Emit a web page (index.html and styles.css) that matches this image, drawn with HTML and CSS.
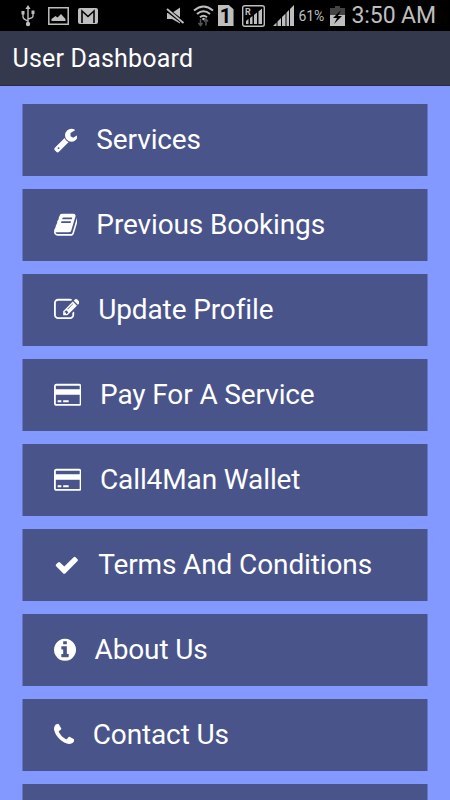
FILE: index.html
```html
<!DOCTYPE html>
<html lang="en">

<head>
    <meta charset="UTF-8">
    <meta name="viewport" content="width=device-width, initial-scale=1.0">
    <title>User Dashboard</title>
    <link rel="stylesheet" href="styles.css">
</head>

<body>

    <!-- Status bar -->
    <div class="status-bar">
        <div class="status-left">
            <svg class="usb" width="14" height="22" viewBox="0 0 14 22" fill="none" stroke="currentColor" stroke-width="1.4">
                <path d="M7 3v15M2 9v3q0 2 5 4M12 9v2q0 2-5 3" />
                <path d="M7 0l2.600 4H4.400zM.5 6h3v3.500h-3zM10.500 5.500h3V9h-3z" fill="currentColor" stroke="none" />
                <circle cx="7" cy="19" r="2.200" fill="currentColor" stroke="none" />
            </svg>
            <svg class="picture" width="21" height="18" viewBox="0 0 21 18" fill="none" stroke="currentColor" stroke-width="1.500">
                <path d="M.8.8h19.400v16.400H.8z" />
                <path d="M3.500 14v-2l4-3 2 1.500L13 7l4.500 5v2z" fill="currentColor" stroke="none" />
            </svg>
            <svg class="mail" width="20" height="16" viewBox="0 0 20 16">
                <rect width="20" height="16" rx="2" fill="currentColor" />
                <path d="M4 15V3l6 5.500L16 3v12" fill="none" stroke="#000" stroke-width="1.600" />
            </svg>
        </div>
        <div class="status-right">
            <svg class="mute" width="19" height="18" viewBox="0 0 19 18">
                <path d="M1 6h5l8-5.500v16L6 12H1z" fill="currentColor" />
                <path d="M0 2l18 14" stroke="#000" stroke-width="4" />
                <path d="M1 2l16.500 14" stroke="currentColor" stroke-width="1.800" />
            </svg>
            <svg class="wifi" width="21" height="22" viewBox="0 0 21 22" fill="none" stroke="currentColor" stroke-width="2">
                <path d="M1 5.500q9.500-8 19 0M4 9q6.500-5.500 13 0M7 12.300q3.500-3 7 0" />
                <circle cx="10.500" cy="14" r="1.300" fill="currentColor" stroke="none" />
                <path d="M7.500 14v6M5.500 18l2 2.500 2-2.500M13 20.500v-6M11 16.500l2-2.500 2 2.500" stroke="#555" stroke-width="1.500" />
            </svg>
            <div class="sim">1</div>
            <svg class="roaming" width="23" height="22" viewBox="0 0 23 22">
                <rect x=".7" y=".7" width="21.600" height="20.600" rx="2" fill="none" stroke="currentColor" stroke-width="1.400" />
                <path d="M4 19v-3l2.500-2v5zM8 19v-6l2.500-2v8zM12 19v-9l3-2.500V19zM16.500 19V6.500L20 3.500V19z" fill="currentColor" />
                <text x="3" y="10" class="roaming-text">R</text>
            </svg>
            <svg class="signal" width="21" height="21" viewBox="0 0 21 21" fill="currentColor">
                <path d="M0 21l3.500-3.500V21zM4.500 21v-4.500L8 13v8zM9 21v-9l3.500-3.500V21zM13.500 21V7.500L16 5v16zM17 21V4l4-4v21z" />
            </svg>
            <span class="percent">61%</span>
            <svg class="battery" width="15" height="20" viewBox="0 0 15 20">
                <path d="M5 0h5v2h5v8H0V2h5z" fill="#444" />
                <path d="M0 9h15v11H0z" fill="currentColor" />
                <path d="M11 4l-8 8h4l-3 6 8-8H8z" fill="#000" />
            </svg>
            <span class="clock">3:50 AM</span>
        </div>
    </div>

    <div class="header">
        <h1>User Dashboard</h1>
    </div>

    <!-- Menu -->
    <div class="menu">
        <a class="menu-item">
            <svg class="icon" viewBox="64 0 1664 1792"><path d="M448 1472q0-26-19-45t-45-19-45 19-19 45 19 45 45 19 45-19 19-45zm644-420l-682 682q-37 37-90 37-52 0-91-37l-106-108q-38-36-38-90 0-53 38-91l681-681q39 98 114.500 173.500t173.500 114.500zm634-435q0 39-23 106-47 134-164.500 217.500t-258.500 83.500q-185 0-316.500-131.500t-131.500-316.500 131.500-316.500 316.500-131.500q58 0 121.500 16.500t107.500 46.500q16 11 16 28t-16 28l-293 169v224l193 107q5-3 79-48.500t135.500-81 70.500-35.500q15 0 23.500 10t8.500 25z" /></svg>
            <span>Services</span>
        </a>
        <a class="menu-item">
            <svg class="icon" viewBox="64 0 1664 1792"><path d="M1703 478q40 57 18 129l-275 906q-19 64-76.500 107.500t-122.500 43.500h-923q-77 0-148.500-53.500t-99.500-131.500q-24-67-2-127 0-4 3-27t4-37q1-8-3-21.500t-3-19.500q2-11 8-21t16.500-23.500 16.500-23.500q23-38 45-91.500t30-91.500q3-10 .5-30t-.5-28q3-11 17-28t17-23q21-36 42-92t25-90q1-9-2.500-32t.5-28q4-13 22-30.500t22-22.500q19-26 42.500-84.500t27.500-96.500q1-8-3-25.500t-2-26.500q2-8 9-18t18-23 17-21q8-12 16.500-30.500t15-35 16-36 19.500-32 26.500-23.500 36-11.500 47.500 5.500l-1 3q38-9 51-9h761q74 0 114 56t18 130l-274 906q-36 119-71.500 153.500t-128.500 34.500h-869q-27 0-38 15-11 16-1 43 24 70 144 70h923q29 0 56-15.500t35-41.500l300-987q7-22 5-57 38 15 59 43zm-1064 2q-4 13 2 22.500t20 9.500h608q13 0 25.500-9.500t16.500-22.500l21-64q4-13-2-22.500t-20-9.500h-608q-13 0-25.500 9.500t-16.500 22.500zm-83 256q-4 13 2 22.500t20 9.500h608q13 0 25.500-9.500t16.500-22.500l21-64q4-13-2-22.500t-20-9.500h-608q-13 0-25.500 9.500t-16.500 22.500z" /></svg>
            <span>Previous Bookings</span>
        </a>
        <a class="menu-item">
            <svg class="icon" viewBox="0 0 1792 1792"><path d="M888 1184l116-116-152-152-116 116v56h96v96h56zm440-720q-16-16-33 1l-350 350q-17 17-1 33t33-1l350-350q17-17 1-33zm80 594v190q0 119-84.500 203.500t-203.500 84.500h-832q-119 0-203.500-84.500t-84.500-203.500v-832q0-119 84.500-203.500t203.500-84.500h832q63 0 117 25 15 7 18 23 3 17-9 29l-49 49q-14 14-32 8-23-6-45-6h-832q-66 0-113 47t-47 113v832q0 66 47 113t113 47h832q66 0 113-47t47-113v-126q0-13 9-22l64-64q15-15 35-7t20 29zm-96-738l288 288-672 672h-288v-288zm444 132l-92 92-288-288 92-92q28-28 68-28t68 28l152 152q28 28 28 68t-28 68z" /></svg>
            <span>Update Profile</span>
        </a>
        <a class="menu-item">
            <svg class="icon" viewBox="0 0 1920 1792"><path d="M1760 128q66 0 113 47t47 113v1216q0 66-47 113t-113 47h-1600q-66 0-113-47t-47-113v-1216q0-66 47-113t113-47h1600zm-1600 128q-13 0-22.500 9.500t-9.500 22.500v224h1664v-224q0-13-9.500-22.500t-22.500-9.500h-1600zm1600 1280q13 0 22.500-9.500t9.500-22.500v-608h-1664v608q0 13 9.500 22.500t22.500 9.500h1600zm-1504-128v-128h256v128h-256zm384 0v-128h384v128h-384z" /></svg>
            <span>Pay For A Service</span>
        </a>
        <a class="menu-item">
            <svg class="icon" viewBox="0 0 1920 1792"><path d="M1760 128q66 0 113 47t47 113v1216q0 66-47 113t-113 47h-1600q-66 0-113-47t-47-113v-1216q0-66 47-113t113-47h1600zm-1600 128q-13 0-22.500 9.500t-9.500 22.500v224h1664v-224q0-13-9.500-22.500t-22.500-9.500h-1600zm1600 1280q13 0 22.500-9.500t9.500-22.500v-608h-1664v608q0 13 9.500 22.500t22.500 9.500h1600zm-1504-128v-128h256v128h-256zm384 0v-128h384v128h-384z" /></svg>
            <span>Call4Man Wallet</span>
        </a>
        <a class="menu-item">
            <svg class="icon" viewBox="0 0 1792 1792"><path d="M1671 566q0 40-28 68l-724 724-136 136q-28 28-68 28t-68-28l-136-136-362-362q-28-28-28-68t28-68l136-136q28-28 68-28t68 28l294 295 656-657q28-28 68-28t68 28l136 136q28 28 28 68z" /></svg>
            <span>Terms And Conditions</span>
        </a>
        <a class="menu-item">
            <svg class="icon" viewBox="128 0 1536 1792"><path d="M1152 1376v-160q0-14-9-23t-23-9h-96v-512q0-14-9-23t-23-9h-320q-14 0-23 9t-9 23v160q0 14 9 23t23 9h96v320h-96q-14 0-23 9t-9 23v160q0 14 9 23t23 9h448q14 0 23-9t9-23zm-128-896v-160q0-14-9-23t-23-9h-192q-14 0-23 9t-9 23v160q0 14 9 23t23 9h192q14 0 23-9t9-23zm640 416q0 209-103 385.500t-279.500 279.500-385.500 103-385.500-103-279.500-279.500-103-385.500 103-385.500 279.500-279.500 385.500-103 385.500 103 279.500 279.500 103 385.500z" /></svg>
            <span>About Us</span>
        </a>
        <a class="menu-item">
            <svg class="icon" viewBox="192 0 1408 1792"><path d="M1600 1240q0 27-10 70.500t-21 68.500q-21 50-122 106-94 51-186 51-27 0-53-3.500t-57.500-12.500-47-14.500-55.500-20.500-49-18q-98-35-175-83-127-79-264-216t-216-264q-48-77-83-175-3-9-18-49t-20.500-55.500-14.500-47-12.500-57.500-3.500-53q0-92 51-186 56-101 106-122 25-11 68.500-21t70.500-10q14 0 21 3 18 6 53 76 11 19 30 54t35 63.500 31 53.500q3 4 17.500 25t21.500 35.500 7 28.500q0 20-28.500 50t-62 55-62 53-28.500 46q0 9 5 22.500t8.500 20.500 14 24 11.500 19q76 137 174 235t235 174q2 1 19 11.500t24 14 20.500 8.500 22.500 5q18 0 46-28.500t53-62 55-62 50-28.500q14 0 28.500 7t35.500 21.500 25 17.500q25 15 53.500 31t63.500 35 54 30q70 35 76 53 3 7 3 21z" /></svg>
            <span>Contact Us</span>
        </a>
        <a class="menu-item"></a>
    </div>

</body>

</html>
```

FILE: styles.css
```css
* {
    box-sizing: border-box;
}

body {
    margin: 0;
    background-color: #8499ff;
    font-family: Roboto, sans-serif;
    color: #fff;
}

.status-bar {
    display: flex;
    justify-content: space-between;
    height: 31px;
    padding: 0 14px 0 21px;
    background-color: #000;
    color: #bebebe;
}

.status-left,
.status-right {
    display: flex;
    align-items: center;
}

.picture {
    margin-left: 13px;
}

.mail {
    margin-left: 9px;
}

.wifi {
    margin-left: 8px;
}

.sim {
    width: 16px;
    height: 21px;
    margin-left: 4px;
    background-color: #bebebe;
    clip-path: polygon(0 0, 70% 0, 100% 20%, 100% 100%, 0 100%);
    color: #000;
    font-size: 20px;
    font-weight: bold;
    line-height: 22px;
    text-align: center;
}

.roaming {
    margin-left: 8px;
}

.roaming-text {
    fill: #bebebe;
    font-size: 9px;
    font-weight: bold;
}

.signal {
    margin-left: 8px;
}

.percent {
    width: 27px;
    margin-left: 5px;
    font-size: 14px;
    letter-spacing: -0.1px;
}

.battery {
    margin-left: 4px;
}

.clock {
    margin-left: 7px;
    font-size: 23px;
    letter-spacing: -0.1px;
    white-space: nowrap;
}

.header {
    display: flex;
    align-items: center;
    height: 55px;
    padding: 1px 0 0 12.5px;
    background-color: #34394d;
    border-bottom: 1px solid #292d3d;
}

.header h1 {
    margin: 0;
    font-size: 25px;
    font-weight: normal;
    letter-spacing: 0.2px;
}

.menu {
    display: flex;
    flex-direction: column;
    gap: 13px;
    height: calc(100vh - 86px);
    padding: 18px 22px 0;
    overflow: hidden;
}

.menu-item {
    display: flex;
    flex-shrink: 0;
    align-items: center;
    gap: 19px;
    height: 72px;
    padding-left: 30.5px;
    background-color: #49548a;
    border: solid #6776c4;
    border-width: 0 1px;
    font-size: 28px;
    letter-spacing: -0.12px;
}

.menu-item span {
    padding-bottom: 2px;
}

.icon {
    height: 25.7px;
    fill: #fff;
}
```
